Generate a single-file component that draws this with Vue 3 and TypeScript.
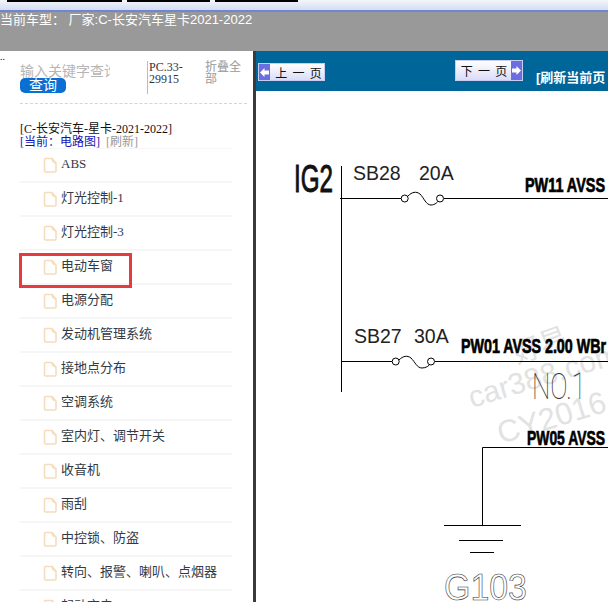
<script setup lang="ts">
const items: string[] = [
  'ABS', '灯光控制-1', '灯光控制-3', '电动车窗', '电源分配', '发动机管理系统', '接地点分布',
  '空调系统', '室内灯、调节开关', '收音机', '雨刮', '中控锁、防盗', '转向、报警、喇叭、点烟器', '起动充电'
]
</script>

<template>
  <div class="page">
    <div class="topstrip"><i class="b1"></i><i class="b2"></i><i class="b3"></i></div>
    <div class="cartype">当前车型： 厂家:C-长安汽车星卡2021-2022</div>
    <div class="main">
      <aside class="side">
        <div class="dots">..</div>
        <div class="search">
          <div class="query">
            <div class="ph">输入关键字查询</div>
            <div class="qbtn">查询</div>
          </div>
          <div class="pc">PC.33-29915</div>
          <div class="fold">折叠全部</div>
        </div>
        <div class="title">[C-长安汽车-星卡-2021-2022]</div>
        <div class="cur"><span class="blue">[当前：电路图]</span> <span class="refresh">[刷新]</span></div>
        <ul class="list">
          <li v-for="it in items" :key="it" class="row">
            <svg class="doc" width="15" height="16" viewBox="0 0 15 16">
              <path d="M1.500 2.500a1 1 0 0 1 1-1h6.500l4 4.500v8a1 1 0 0 1-1 1h-9.500a1 1 0 0 1-1-1z" fill="#fff" stroke="#f5dcbc" stroke-width="1.600" />
              <path d="M9 1.500q-.2 4 4 4.500" fill="none" stroke="#f5dcbc" stroke-width="1.200" />
            </svg>
            <span class="label">{{ it }}</span>
          </li>
        </ul>
        <div class="mark"></div>
      </aside>
      <section class="content">
        <div class="toolbar">
          <div class="pg prev">
            <span class="arrow"><svg width="9" height="9" viewBox="0 0 9 9"><path d="M0 4.500 4.500 0v2.500H9v4H4.500V9z" fill="#fff" /></svg></span>
            <span class="pgtxt">上 一 页</span>
          </div>
          <div class="pg next">
            <span class="pgtxt">下 一 页</span>
            <span class="arrow"><svg width="9" height="9" viewBox="0 0 9 9"><path d="M9 4.500 4.500 0v2.500H0v4h4.500V9z" fill="#fff" /></svg></span>
          </div>
          <div class="refreshpage">[刷新当前页</div>
        </div>
        <div class="canvas">
          <svg class="diagram" width="352" height="511" viewBox="256 91 352 511">
            <g class="wm">
              <text x="472" y="408" font-size="30" transform="rotate(-17 472 408)">car388.com</text>
              <text x="501" y="444" font-size="31" transform="rotate(-17 501 444)">CY2016</text>
              <text x="517" y="364" font-size="28" transform="rotate(-20 517 364)">好易</text>
            </g>
            <g fill="none" stroke="#000" stroke-width="1">
              <path d="M341.500 166v226" />
              <path d="M340 198.500h61M444 198.500h164M341 361.500h51M435 361.500h173" />
              <path d="M408 196C412 192 416 191 420 194C424 198 426 205 431 205C435 205 438 202 440 199" />
              <circle cx="404.700" cy="198.500" r="3.500" fill="#fff" />
              <circle cx="440" cy="198.500" r="3.500" fill="#fff" />
              <path d="M399 360C403 356 407 355 411 358C415 362 417 368 422 368C426 368 429 366 431 363" />
              <circle cx="395.700" cy="361.500" r="3.500" fill="#fff" />
              <circle cx="431" cy="361.500" r="3.500" fill="#fff" />
              <path d="M482.500 525V447.500H608M444 525.500h77M459 540.500h44M470 552.500h24" />
            </g>
            <text class="ig" x="294" y="192" textLength="39" lengthAdjust="spacingAndGlyphs">IG2</text>
            <text class="lab" x="353" y="180">SB28</text>
            <text class="lab" x="419" y="180">20A</text>
            <text class="lab" x="354" y="342.500">SB27</text>
            <text class="lab" x="414" y="342.500">30A</text>
            <text class="wire" x="525" y="192" textLength="92" lengthAdjust="spacingAndGlyphs">PW11 AVSS 2</text>
            <text class="wire" x="461" y="353" textLength="145" lengthAdjust="spacingAndGlyphs">PW01 AVSS 2.00 WBr</text>
            <text class="wire" x="527" y="445" textLength="78" lengthAdjust="spacingAndGlyphs">PW05 AVSS</text>
            <text class="no" x="532" y="399" textLength="54" lengthAdjust="spacingAndGlyphs">NO.1</text>
            <text class="g" x="444" y="600" textLength="83" lengthAdjust="spacingAndGlyphs">G103</text>
          </svg>
        </div>
      </section>
    </div>
  </div>
</template>

<style>
html, body { margin: 0; padding: 0; background: #fff; overflow: hidden; }
</style>

<style scoped>
.page { width: 608px; height: 602px; overflow: hidden; font-family: "Liberation Serif", "Noto Sans CJK SC", serif; }
.topstrip { height: 10px; background: linear-gradient(#f3f5fc, #d6ddf2); border-bottom: 2px solid #6f87d2; display: flex; gap: 5px; padding-left: 7px; align-items: flex-start; }
.topstrip i { display: block; height: 2px; background: #000; }
.b1 { width: 115px; }
.b2 { width: 83px; }
.b3 { width: 83px; }
.cartype { height: 39px; background: #999; color: #fff; font: 13px/15px "Liberation Sans", "Noto Sans CJK SC", sans-serif; white-space: pre; }
.main { display: flex; height: 551px; }
.side { width: 256px; box-sizing: border-box; border-right: 3px solid #3a3a3a; position: relative; flex: none; overflow: hidden; }
.dots { position: absolute; left: 0; top: 1px; font-size: 10px; line-height: 10px; }
.search { display: flex; margin: 0 6px 0 20px; padding-top: 10px; height: 42px; border-bottom: 1px dashed #d5d5d5; }
.query { width: 127px; flex: none; font-family: "Liberation Sans", "Noto Sans CJK SC", sans-serif; }
.ph { width: 90px; height: 16px; margin-top: 1px; overflow: hidden; white-space: nowrap; font-size: 14px; line-height: 18px; color: #b5b5b5; }
.qbtn { width: 46px; height: 15px; background: #0a6fd2; color: #fff; border-radius: 5px; font-size: 14px; line-height: 15px; text-align: center; }
.pc { width: 48px; height: 33px; padding-left: 1px; border-left: 1px solid #bbb; font-size: 12px; line-height: 12px; color: #333; flex: none; }
.fold { width: 40px; margin-left: 8px; font-family: "Liberation Sans", "Noto Sans CJK SC", sans-serif; font-size: 12px; line-height: 12px; color: #999; }
.title { margin: 19px 0 0 20px; font-size: 12px; line-height: 13px; color: #111; white-space: nowrap; }
.cur { margin-left: 20px; font-size: 12px; line-height: 13px; white-space: nowrap; }
.blue { color: #1414b4; }
.refresh { color: #999; margin-left: 3px; }
.list { list-style: none; margin: -1px 0 0 20px; padding: 0; width: 212px; }
.row { height: 32px; border-top: 2px solid #f6f6f6; display: flex; align-items: center; padding-left: 23px; }
.row:first-child { border-top-width: 1px; }
.doc { flex: none; margin-right: 3px; }
.label { font-family: "Liberation Serif", "Noto Sans CJK SC", serif; font-size: 13px; line-height: 16px; color: #333a45; white-space: nowrap; position: relative; top: -1px; }
.mark { position: absolute; left: 19px; top: 202px; width: 113px; height: 35px; box-sizing: border-box; border: 3px solid #e63b3e; }
.content { flex: 1; min-width: 0; }
.toolbar { height: 40px; background: #006699; position: relative; overflow: hidden; }
.pg { position: absolute; box-sizing: border-box; border: 1px solid #c8cdf0; background: linear-gradient(#ffffff, #d9dcf8); display: flex; align-items: center; font: 12px "Liberation Sans", "Noto Sans CJK SC", sans-serif; letter-spacing: 1px; color: #111; white-space: pre; }
.prev { left: 2px; top: 12px; width: 67px; height: 18px; }
.next { left: 199px; top: 9px; width: 68px; height: 21px; }
.prev .pgtxt { padding-left: 4px; }
.next .pgtxt { padding-left: 2px; }
.arrow { width: 11px; align-self: stretch; background: #6a6ee0; display: flex; align-items: center; justify-content: center; flex: none; }
.arrow svg { display: block; }
.pgtxt { flex: 1; text-align: center; }
.refreshpage { position: absolute; left: 280px; top: 16px; color: #fff; font: bold 13px "Liberation Sans", "Noto Sans CJK SC", sans-serif; white-space: nowrap; }
.canvas { height: 511px; overflow: hidden; }
.diagram { display: block; }
.wm text { fill: #e2e2e2; font-family: "Liberation Sans", "Noto Sans CJK SC", sans-serif; }
.ig { font: 400 39px "Liberation Sans", sans-serif; fill: #111; stroke: #111; stroke-width: 1px; }
.lab { font: 19.500px "Liberation Sans", sans-serif; fill: #222; }
.wire { font: 700 20px "Liberation Sans", sans-serif; fill: #000; stroke: #000; stroke-width: .7px; }
.no { font: 100 36px Roboto, "Liberation Sans", sans-serif; fill: #333; }
.g { font: 400 36px "Liberation Sans", sans-serif; fill: #fff; stroke: #333; stroke-width: .6px; }
</style>
